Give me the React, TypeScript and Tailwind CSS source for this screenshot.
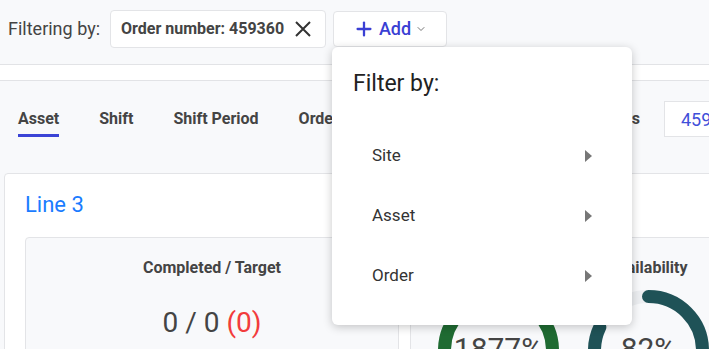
import { Plus, ChevronDown } from "lucide-react";

const menuItems = ["Site", "Asset", "Order"];
const tabs = ["Asset", "Shift", "Shift Period", "Order"];

function Gauge({
  percent,
  label,
  color,
}: {
  percent: number;
  label: string;
  color: string;
}) {
  const r = 54;
  const c = 2 * Math.PI * r;
  const shown = Math.min(percent, 100) / 100;
  return (
    <svg width="121" height="121" viewBox="0 0 121 121">
      <circle cx="60.5" cy="60.5" r={r} fill="none" stroke="#eceef1" strokeWidth="13" />
      <circle
        cx="60.5"
        cy="60.5"
        r={r}
        fill="none"
        stroke={color}
        strokeWidth="13"
        strokeLinecap="round"
        strokeDasharray={`${c * shown} ${c}`}
        transform="rotate(-90 60.5 60.5)"
      />
      <text
        x="60.5"
        y="69"
        textAnchor="middle"
        fontSize="30"
        fill="#444"
        fontFamily="Roboto, sans-serif"
      >
        {label}
      </text>
    </svg>
  );
}

export default function App() {
  return (
    <div className="relative h-[349px] w-[709px] overflow-hidden bg-[#f8f9fb] font-['Roboto',sans-serif] text-[#444]">
      {/* Filter bar */}
      <div className="flex h-[65px] items-center gap-[10px] border-b border-[#e2e3e6] pb-[7px] pl-[8px]">
        <span className="text-[18px]">Filtering by:</span>
        <div className="flex h-[38px] w-[216px] items-center justify-between rounded border border-[#e3e4e7] bg-white pl-[10px] pr-[14px]">
          <span className="text-[16px] font-bold">Order number: 459360</span>
          <svg width="16" height="16" viewBox="0 0 16 16" className="text-[#333]">
            <path d="M1 1 L15 15 M15 1 L1 15" stroke="currentColor" strokeWidth="2" />
          </svg>
        </div>
        <button className="ml-[-3px] flex h-[36px] w-[114px] items-center justify-center gap-[4px] rounded border border-[#e3e4e7] bg-white">
          <Plus size={22} strokeWidth={2.5} className="text-[#3a3fd4]" />
          <span className="text-[18px] font-medium text-[#3a3fd4]">Add</span>
          <ChevronDown size={12} className="text-[#777]" />
        </button>
      </div>
      <div className="h-[16px] border-b border-[#e2e3e6] bg-white" />

      {/* Tabs */}
      <div className="h-[92px] pt-[20px]">
        <div className="flex items-center pl-[18px]">
          <div className="flex gap-10">
            {tabs.map((t, i) => (
              <div key={t} className="relative text-[16px] font-bold leading-[24px]">
                {t}
                {i === 0 && (
                  <div className="absolute left-0 right-0 top-[27px] h-[3px] bg-[#3b44d6]" />
                )}
              </div>
            ))}
          </div>
          <div className="ml-auto mr-[-75px] flex items-center gap-[24px]">
            <span className="text-[16px] font-bold">Orders</span>
            <div className="flex h-[36px] w-[120px] items-center border border-[#e3e4e7] bg-white pl-[16px] text-[18px] text-[#3f4fd9]">
              459360
            </div>
          </div>
        </div>
      </div>

      {/* Line card */}
      <div className="ml-[4px] w-[760px] rounded border border-[#e3e4e7] bg-white px-[20px] pt-[16px]">
        <div className="text-[22px] leading-[30px] text-[#1a7cff]">Line 3</div>
        <div className="mt-[17px] flex gap-[11px]">
          <div className="flex h-[140px] w-[374px] flex-col items-center rounded border border-[#e3e4e7] bg-[#f8f9fb] pt-[20px]">
            <div className="text-[16px] font-bold leading-[20px]">Completed / Target</div>
            <div className="mt-[24px] text-[28px]">
              0 / 0 <span className="text-[#f23c3c]">(0)</span>
            </div>
          </div>
          <div className="flex h-[140px] flex-1 rounded border border-[#e3e4e7] bg-[#f8f9fb] pl-[12px] pt-[20px]">
            <div className="flex w-[150px] flex-col items-center">
              <div className="text-[16px] font-bold leading-[20px]">Performance</div>
              <div className="mt-[12px]">
                <Gauge percent={1877} label="1877%" color="#1f6b32" />
              </div>
            </div>
            <div className="flex w-[150px] flex-col items-center">
              <div className="text-[16px] font-bold leading-[20px]">Availability</div>
              <div className="mt-[12px]">
                <Gauge percent={82} label="82%" color="#1f5257" />
              </div>
            </div>
          </div>
        </div>
      </div>

      {/* Filter menu */}
      <div className="absolute left-[332px] top-[47px] h-[278px] w-[300px] rounded-md bg-white shadow-[0_2px_10px_rgba(0,0,0,0.22)]">
        <div className="pl-[21px] pt-[22px] text-[23px] leading-[30px] text-[#222]">Filter by:</div>
        <div className="mt-[27px] flex flex-col">
          {menuItems.map((m) => (
            <div key={m} className="flex h-[60px] items-center justify-between pl-[40px] pr-[40px]">
              <span className="text-[17px] text-[#333]">{m}</span>
              <svg width="7" height="12" viewBox="0 0 7 12">
                <path d="M0 0 L7 6 L0 12 Z" fill="#777" />
              </svg>
            </div>
          ))}
        </div>
      </div>
    </div>
  );
}
